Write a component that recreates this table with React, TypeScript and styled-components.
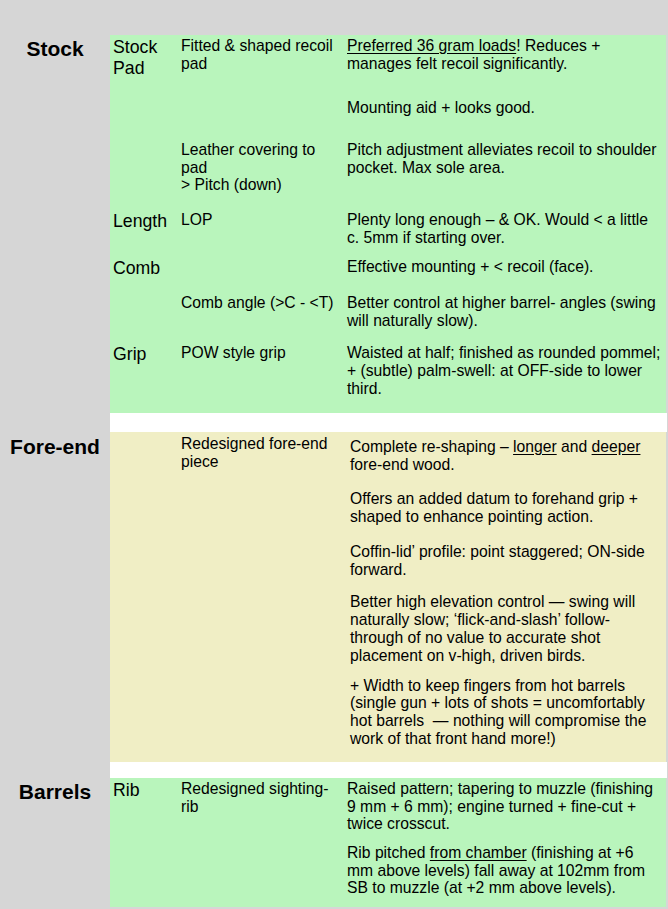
import React from "react";
import styled, { createGlobalStyle } from "styled-components";

const GlobalStyle = createGlobalStyle`
  html, body {
    margin: 0;
    padding: 0;
    background: #d6d6d6;
  }
  body {
    font-family: "Liberation Sans", Arial, sans-serif;
    color: #000;
  }
`;

const Page = styled.div`
  width: 668px;
  min-height: 100vh;
  box-sizing: border-box;
  padding-top: 35px;
  background: #d6d6d6;
`;

const SectionRow = styled.section`
  display: grid;
  grid-template-columns: 110px 556px;
`;

const Gap = styled.div<{ $height: number }>`
  margin-left: 110px;
  width: 557px;
  height: ${(p) => p.$height}px;
  background: #ffffff;
`;

const SectionTitle = styled.h2<{ $top: number }>`
  margin: 0;
  padding-top: ${(p) => p.$top}px;
  text-align: center;
  font-size: 21px;
  line-height: 24px;
  font-weight: bold;
  color: #000;
`;

const Panel = styled.div<{ $tone: "green" | "yellow"; $pad: string }>`
  background: ${(p) => (p.$tone === "green" ? "#b9f5bc" : "#f0eec5")};
  padding: ${(p) => p.$pad};
`;

const EntryRow = styled.div<{ $space: number }>`
  display: grid;
  grid-template-columns: 68px 166px 1fr;
  align-items: start;
  margin-top: ${(p) => p.$space}px;
`;

const Part = styled.div`
  font-size: 17.7px;
  line-height: 21px;
`;

const Item = styled.div`
  padding-right: 6px;
  font-size: 15.7px;
  line-height: 17.8px;
`;

const Notes = styled.div<{ $inset: number; $top: number }>`
  padding-left: ${(p) => p.$inset}px;
  padding-top: ${(p) => p.$top}px;
`;

const NoteText = styled.p<{ $space: number }>`
  margin: ${(p) => p.$space}px 0 0;
  font-size: 15.7px;
  line-height: 17.8px;
`;

const Marked = styled.span`
  text-decoration: underline;
  text-underline-offset: 2px;
`;

type Note = { text: React.ReactNode; space?: number };

type Row = {
  space: number;
  part?: string;
  item?: React.ReactNode;
  notes: Note[];
};

type Section = {
  title: string;
  tone: "green" | "yellow";
  gapAbove: number;
  titleTop: number;
  pad: string;
  notesInset: number;
  notesTop: number;
  rows: Row[];
};

const sections: Section[] = [
  {
    title: "Stock",
    tone: "green",
    gapAbove: 0,
    titleTop: 2,
    pad: "2px 2px 15.6px 3px",
    notesInset: 0,
    notesTop: 0,
    rows: [
      {
        space: 0,
        part: "Stock Pad",
        item: "Fitted & shaped recoil pad",
        notes: [
          {
            text: (
              <>
                <Marked>Preferred 36 gram loads</Marked>! Reduces + manages felt
                recoil significantly.
              </>
            ),
          },
          { text: "Mounting aid + looks good.", space: 26 },
        ],
      },
      {
        space: 24.5,
        item: (
          <>
            Leather covering to pad
            <br />
            &gt; Pitch (down)
          </>
        ),
        notes: [
          {
            text: "Pitch adjustment alleviates recoil to shoulder pocket. Max sole area.",
          },
        ],
      },
      {
        space: 16.7,
        part: "Length",
        item: "LOP",
        notes: [
          {
            text: "Plenty long enough \u2013 & OK. Would < a little c. 5mm if starting over.",
          },
        ],
      },
      {
        space: 11.4,
        part: "Comb",
        notes: [{ text: "Effective mounting + < recoil (face)." }],
      },
      {
        space: 15,
        item: "Comb angle (>C - <T)",
        notes: [
          {
            text: "Better control at higher barrel- angles (swing will naturally slow).",
          },
        ],
      },
      {
        space: 14.4,
        part: "Grip",
        item: "POW style grip",
        notes: [
          {
            text: "Waisted at half; finished as rounded pommel; + (subtle) palm-swell: at OFF-side to lower third.",
          },
        ],
      },
    ],
  },
  {
    title: "Fore-end",
    tone: "yellow",
    gapAbove: 19,
    titleTop: 3,
    pad: "3px 11px 14px 3px",
    notesInset: 3,
    notesTop: 3,
    rows: [
      {
        space: 0,
        item: "Redesigned fore-end piece",
        notes: [
          {
            text: (
              <>
                Complete re-shaping &ndash; <Marked>longer</Marked> and{" "}
                <Marked>deeper</Marked> fore-end wood.
              </>
            ),
          },
          {
            text: "Offers an added datum to forehand grip + shaped to enhance pointing action.",
            space: 16.4,
          },
          {
            text: "Coffin-lid\u2019 profile: point staggered; ON-side forward.",
            space: 17.4,
          },
          {
            text: "Better high elevation control \u2014 swing will naturally slow; \u2018flick-and-slash\u2019 follow-through of no value to accurate shot placement on v-high, driven birds.",
            space: 14.7,
          },
          {
            text: "+ Width to keep fingers from hot barrels (single gun + lots of shots = uncomfortably hot barrels\u00a0 \u2014 nothing will compromise the work of that front hand more!)",
            space: 12.2,
          },
        ],
      },
    ],
  },
  {
    title: "Barrels",
    tone: "green",
    gapAbove: 16,
    titleTop: 2,
    pad: "2px 11px 9.6px 3px",
    notesInset: 0,
    notesTop: 0,
    rows: [
      {
        space: 0,
        part: "Rib",
        item: "Redesigned sighting-rib",
        notes: [
          {
            text: "Raised pattern; tapering to muzzle (finishing 9 mm + 6 mm); engine turned + fine-cut + twice crosscut.",
          },
          {
            text: (
              <>
                Rib pitched <Marked>from chamber</Marked> (finishing at +6 mm
                above levels) fall away at 102mm from SB to muzzle (at +2 mm
                above levels).
              </>
            ),
            space: 10.6,
          },
        ],
      },
    ],
  },
];

const App = () => {
  return (
    <Page>
      <GlobalStyle />
      {sections.map((section) => (
        <React.Fragment key={section.title}>
          {section.gapAbove > 0 && <Gap $height={section.gapAbove} />}
          <SectionRow>
            <SectionTitle $top={section.titleTop}>{section.title}</SectionTitle>
            <Panel $tone={section.tone} $pad={section.pad}>
              {section.rows.map((row, i) => (
                <EntryRow key={i} $space={row.space}>
                  <Part>{row.part}</Part>
                  <Item>{row.item}</Item>
                  <Notes $inset={section.notesInset} $top={section.notesTop}>
                    {row.notes.map((note, j) => (
                      <NoteText key={j} $space={note.space ?? 0}>
                        {note.text}
                      </NoteText>
                    ))}
                  </Notes>
                </EntryRow>
              ))}
            </Panel>
          </SectionRow>
        </React.Fragment>
      ))}
    </Page>
  );
};

export default App;
